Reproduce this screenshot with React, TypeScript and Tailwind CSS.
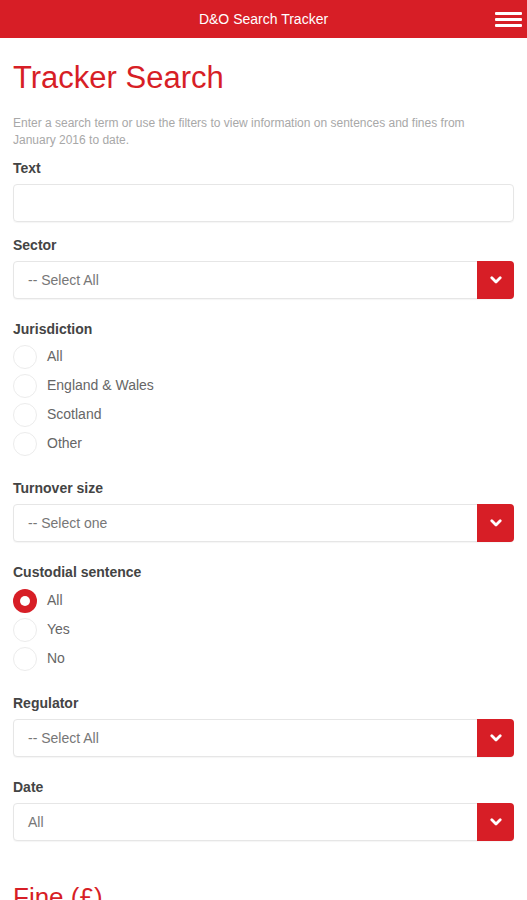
import React from "react";

const RED = "bg-[#d71e26]";

function Chevron() {
  return (
    <svg width="12" height="9" viewBox="0 0 12 9" fill="none">
      <path d="M1.8 1.8 L6 6 L10.2 1.8" stroke="white" strokeWidth="2.8" strokeLinecap="round" strokeLinejoin="round" />
    </svg>
  );
}

function Label({ children, className = "" }: { children: React.ReactNode; className?: string }) {
  return <div className={`text-[14px] leading-[18px] font-bold text-[#444] ${className}`}>{children}</div>;
}

function Select({ value, className = "" }: { value: string; className?: string }) {
  return (
    <div className={`flex h-[38px] rounded-[4px] border border-[#e6e6e6] bg-white shadow-[0_1px_1px_rgba(0,0,0,0.04)] ${className}`}>
      <div className="flex-1 flex items-center pl-[14px] text-[14px] text-[#777]">{value}</div>
      <div className={`w-[37px] -my-px -mr-px ${RED} rounded-r-[4px] flex items-center justify-center`}>
        <Chevron />
      </div>
    </div>
  );
}

function Radio({ label, checked = false }: { label: string; checked?: boolean }) {
  return (
    <div className="flex items-center h-[29px]">
      {checked ? (
        <div className="w-[24px] h-[24px] rounded-full bg-[#d71e26] flex items-center justify-center">
          <div className="w-[10px] h-[10px] rounded-full bg-white" />
        </div>
      ) : (
        <div className="w-[24px] h-[24px] rounded-full border border-[#ececec] bg-white" />
      )}
      <span className="ml-[10px] text-[14px] text-[#666]">{label}</span>
    </div>
  );
}

export default function App() {
  return (
    <div className="w-[527px] min-h-[900px] bg-white overflow-hidden" style={{ fontFamily: '"Liberation Sans", Arial, sans-serif' }}>
      <header className={`h-[38px] ${RED} relative flex items-center justify-center`}>
        <span className="text-white text-[14px]">D&amp;O Search Tracker</span>
        <div className="absolute right-[5px] top-[12px] w-[27px] flex flex-col gap-[3px]">
          <div className="h-[3px] bg-white rounded-[1px]" />
          <div className="h-[3px] bg-white rounded-[1px]" />
          <div className="h-[3px] bg-white rounded-[1px]" />
        </div>
      </header>
      <main className="px-[13px]">
        <h1 className="mt-[22px] text-[31px] leading-[36px] text-[#d71e26] font-normal">Tracker Search</h1>
        <p className="mt-[19px] max-w-[475px] text-[12px] leading-[17px] text-[#a8a8a8]">
          Enter a search term or use the filters to view information on sentences and fines from January 2016 to date.
        </p>
        <Label className="mt-[10px]">Text</Label>
        <div className="mt-[7px] h-[38px] rounded-[4px] border border-[#e6e6e6] shadow-[0_1px_1px_rgba(0,0,0,0.04)]" />
        <Label className="mt-[14px]">Sector</Label>
        <Select value="-- Select All" className="mt-[7px]" />
        <Label className="mt-[21px]">Jurisdiction</Label>
        <div className="mt-[4px]">
          <Radio label="All" />
          <Radio label="England & Wales" />
          <Radio label="Scotland" />
          <Radio label="Other" />
        </div>
        <Label className="mt-[21px]">Turnover size</Label>
        <Select value="-- Select one" className="mt-[7px]" />
        <Label className="mt-[21px]">Custodial sentence</Label>
        <div className="mt-[5px]">
          <Radio label="All" checked />
          <Radio label="Yes" />
          <Radio label="No" />
        </div>
        <Label className="mt-[21px]">Regulator</Label>
        <Select value="-- Select All" className="mt-[7px]" />
        <Label className="mt-[21px]">Date</Label>
        <Select value="All" className="mt-[7px]" />
        <h2 className="mt-[41px] text-[26px] leading-[30px] text-[#d71e26] font-normal">Fine (£)</h2>
      </main>
    </div>
  );
}
